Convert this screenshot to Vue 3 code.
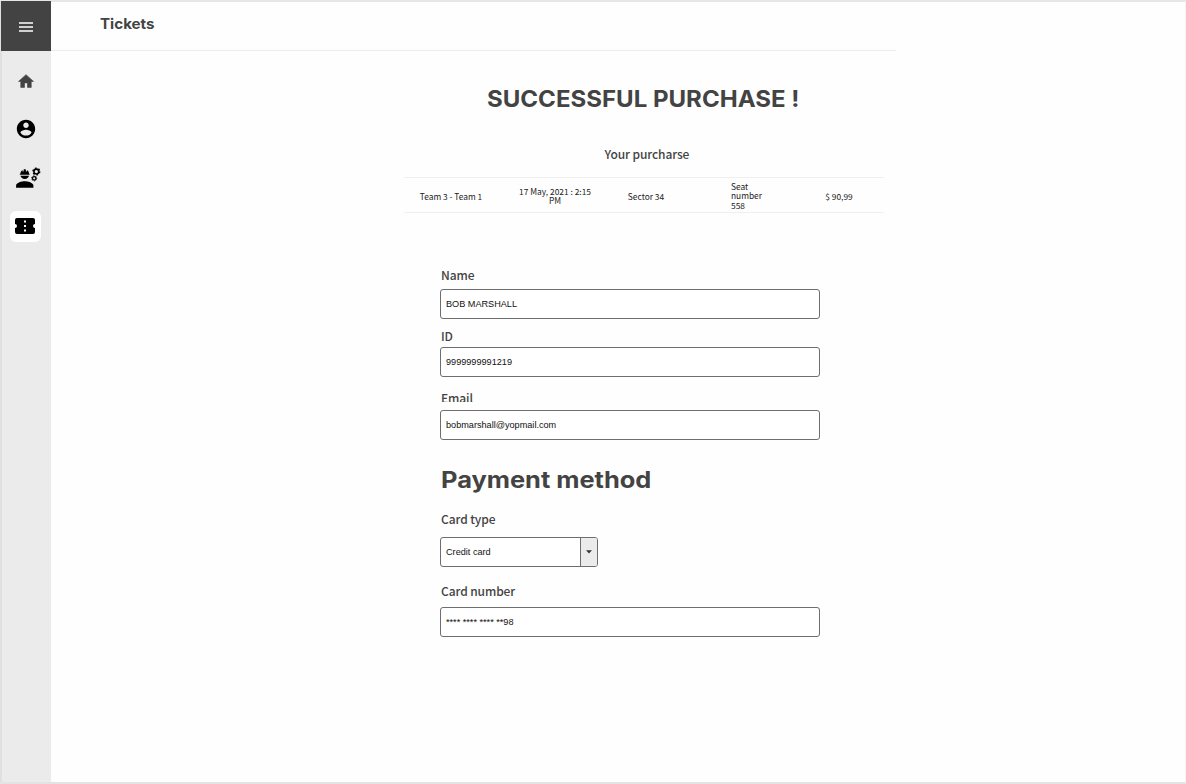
<script setup>
const columns = [
  { text: 'Team 3 - Team 1', key: 'match' },
  { text: '17 May, 2021 : 2:15 PM', key: 'date' },
  { text: 'Sector 34', key: 'sector' },
  { text: 'Seat number 558', key: 'seat' },
  { text: '$ 90,99', key: 'price' },
]
const fields = [
  { label: 'Name', value: 'BOB MARSHALL', key: 'name' },
  { label: 'ID', value: '9999999991219', key: 'id' },
  { label: 'Email', value: 'bobmarshall@yopmail.com', key: 'email' },
]
</script>

<template>
  <div class="page">
    <aside class="sidebar">
      <div class="menu">
        <svg width="14" height="10" viewBox="0 0 14 10"><path d="M0 1h14M0 5h14M0 9h14" stroke="#fff" stroke-width="1.5" /></svg>
      </div>
      <nav class="nav">
        <div class="item">
          <svg width="18" height="18" viewBox="0 0 24 24"><path fill="#434343" d="M10 20.500v-6h4v6h5v-8h3L12 3.500 2 12.500h3v8z" stroke="#434343" stroke-width=".8" stroke-linejoin="round" /></svg>
        </div>
        <div class="item">
          <svg width="22" height="22" viewBox="0 0 24 24"><path d="M12 2C6.480 2 2 6.480 2 12s4.480 10 10 10 10-4.480 10-10S17.520 2 12 2zm0 3c1.660 0 3 1.340 3 3s-1.340 3-3 3-3-1.340-3-3 1.340-3 3-3zm0 14.200c-2.500 0-4.710-1.280-6-3.220.030-1.990 4-3.080 6-3.080 1.990 0 5.970 1.090 6 3.080-1.290 1.940-3.500 3.220-6 3.220z" /></svg>
        </div>
        <div class="item">
          <svg class="worker" width="26" height="26" viewBox="0 0 24 24">
            <path d="M9 15c-2.670 0-8 1.340-8 4v2h16v-2c0-2.660-5.330-4-8-4zM4.740 9H5c0 2.210 1.790 4 4 4s4-1.790 4-4h.260c.270 0 .490-.220.490-.490v-.020c0-.270-.220-.490-.490-.490H13c0-1.480-.810-2.750-2-3.450v.950c0 .280-.220.500-.500.500S10 5.780 10 5.500V4.140C9.680 4.060 9.350 4 9 4s-.680.060-1 .140V5.500c0 .280-.220.500-.500.500S7 5.780 7 5.500v-.950C5.810 5.250 5 6.520 5 8h-.260c-.270 0-.490.220-.490.490v.030c0 .260.220.480.490.480z" />
            <path d="M4.500 9h9v.9h-9z" fill="#ebebeb" />
            <circle cx="19.700" cy="6" r="2.250" fill="none" stroke="#000" stroke-width="1.500" />
            <circle cx="19.700" cy="6" r="3.200" fill="none" stroke="#000" stroke-width="1.200" stroke-dasharray="1.600 1.750" />
            <circle cx="17.700" cy="12.300" r="1.600" fill="none" stroke="#000" stroke-width="1.200" />
            <circle cx="17.700" cy="12.300" r="2.350" fill="none" stroke="#000" stroke-width=".9" stroke-dasharray="1.200 1.260" />
          </svg>
        </div>
        <div class="item active">
          <svg width="20" height="16" viewBox="0 0 20 16"><path fill-rule="evenodd" d="M2 0h16a2 2 0 0 1 2 2v4a2 2 0 0 0 0 4v4a2 2 0 0 1-2 2H2a2 2 0 0 1-2-2v-4a2 2 0 0 0 0-4V2a2 2 0 0 1 2-2zM9 2.500v2h2v-2zM9 7v2h2V7zM9 11.500v2h2v-2z" /></svg>
        </div>
      </nav>
    </aside>

    <main class="main">
      <header class="header"><span class="display brand">Tickets</span></header>
      <h1 class="display title">SUCCESSFUL PURCHASE !</h1>
      <p class="label caption">Your purcharse</p>
      <div class="ticket">
        <span v-for="c in columns" :key="c.key" class="cell" :class="c.key">{{ c.text }}</span>
      </div>
      <section class="form">
        <div v-for="f in fields" :key="f.key" class="field" :class="f.key">
          <div class="label clipped">{{ f.label }}</div>
          <div class="input"><span>{{ f.value }}</span></div>
        </div>
        <h2 class="display payment">Payment method</h2>
        <div class="label type">Card type</div>
        <div class="input select">
          <span>Credit card</span>
          <div class="arrow"><svg width="6" height="4" viewBox="0 0 6 4"><path d="M0 .3h6L3 3.600z" fill="#333" /></svg></div>
        </div>
        <div class="label number">Card number</div>
        <div class="input card"><span>**** **** **** **98</span></div>
      </section>
    </main>
  </div>
</template>

<style>
body { background: #fff; }
</style>

<style scoped>
.page {
  box-sizing: border-box;
  width: 1186px;
  height: 784px;
  display: flex;
  border-top: 2px solid #e6e6e6;
  border-bottom: 2px solid #e3e3e3;
  border-right: 1px solid #f3f3f3;
  background: #fefefe;
}
.sidebar {
  box-sizing: border-box;
  width: 51px;
  flex: none;
  background: #ebebeb;
  border-left: 2px solid #e0e0e0;
}
.menu {
  box-sizing: border-box;
  width: 50px;
  height: 50px;
  margin: -1px 0 0 -1px;
  padding-top: 1px;
  position: relative;
  background: #434343;
  display: flex;
  align-items: center;
  justify-content: center;
}
.nav {
  display: flex;
  flex-direction: column;
  align-items: center;
  gap: 17px;
  padding-top: 14px;
  margin-left: -2px;
}
.item {
  width: 31px;
  height: 31px;
  display: flex;
  align-items: center;
  justify-content: center;
  border-radius: 6px;
}
.item svg { flex: none; }
.item:nth-child(2) { margin-left: 1px; }
.item .worker { margin-left: 4px; margin-top: 2px; }
.item.active { background: #fff; margin-top: 1.500px; }
.item.active svg { margin-right: 1px; margin-bottom: 1px; }
.main { flex: 1; }
.display {
  font-family: Inter, sans-serif;
  font-weight: 700;
  color: #434343;
  margin: 0;
  white-space: nowrap;
  transform-origin: 0 50%;
}
.header {
  width: 845px;
  height: 48px;
  border-bottom: 1px solid #ececec;
}
.brand {
  display: block;
  width: max-content;
  margin-left: 49px;
  padding-top: 12px;
  font-size: 14.500px;
  line-height: 20px;
  transform: scaleX(1.045);
}
.title {
  margin: 34px 0 0 436px;
  font-size: 23px;
  line-height: 28px;
  width: max-content;
  transform: scaleX(1.045);
}
.label {
  font-family: "Noto Sans CJK SC", sans-serif;
  font-weight: 500;
  font-size: 12px;
  letter-spacing: -.1px;
  line-height: 18px;
  color: #434343;
  margin: 0;
  white-space: nowrap;
}
.caption { margin: 32px 0 0 553.500px; }
.ticket {
  box-sizing: border-box;
  width: 480px;
  height: 36px;
  margin: 14px 0 0 353px;
  padding-top: 2px;
  border-top: 1px solid #efefef;
  border-bottom: 1px solid #efefef;
  display: grid;
  grid-template-columns: 94px 113px 70px 122px 81px;
  align-items: center;
  font-family: "Noto Sans CJK SC", sans-serif;
  font-size: 8.400px;
  line-height: 9.500px;
  color: #222;
  text-align: center;
}
.cell.match, .cell.sector, .cell.price { padding-top: 2px; }
.cell.date { padding: 0 17px 0 18px; }
.cell.seat { width: 34px; text-align: left; padding-left: 50px; }
.cell.price { padding-right: 9px; }
.form { padding: 56px 0 0 389px; width: 380px; }
.clipped {
  height: 11px;
  line-height: 12.500px;
  overflow: hidden;
  padding-left: 1px;
}
.input {
  box-sizing: border-box;
  height: 30px;
  border: 1px solid #6e6e6e;
  border-radius: 3px;
  padding-left: 5px;
  display: flex;
  align-items: center;
  font-family: "Liberation Sans", Arial, sans-serif;
  font-size: 9.150px;
  line-height: 12px;
  color: #111;
  background: #fff;
}
.field .input { margin-top: 9px; }
.field.id { margin-top: 11px; }
.field.id .input { margin-top: 6px; }
.field.id .clipped, .field.email .clipped { line-height: 11px; }
.field.email { margin-top: 15px; }
.field.email .input { margin-top: 8px; }
.field.email .clipped { height: 10px; }
.payment {
  margin: 26px 0 0 1px;
  font-size: 23px;
  line-height: 28px;
  width: max-content;
  transform: scaleX(1.105);
}
.type { margin: 16px 0 0 1px; }
.select { width: 158px; margin-top: 9px; justify-content: space-between; }
.arrow {
  width: 16px;
  height: 28px;
  border-left: 1px solid #6e6e6e;
  border-radius: 0 2px 2px 0;
  background: #ebebeb;
  display: flex;
  align-items: center;
  justify-content: center;
}
.number { margin: 15px 0 0 1px; }
.card { margin-top: 7px; }
.select span, .card span { padding-bottom: 1px; }
</style>
